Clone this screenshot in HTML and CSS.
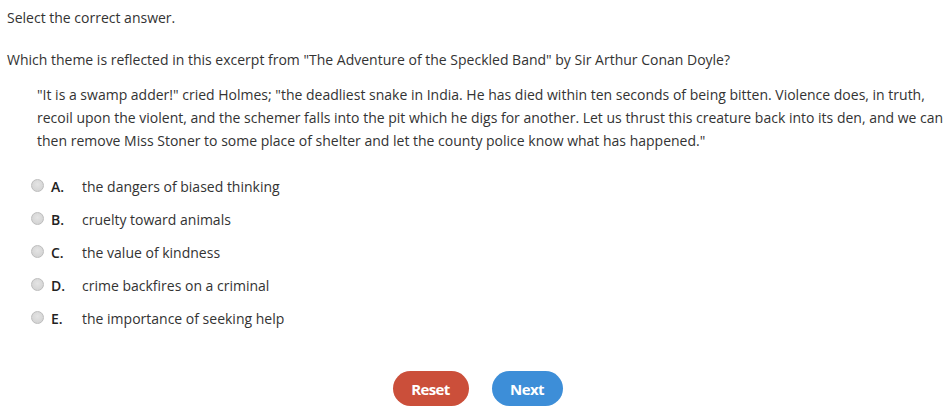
FILE: index.html
```html
<!DOCTYPE html>
<html lang="en">
<head>
    <meta charset="UTF-8">
    <title>Question</title>
    <link rel="stylesheet" href="styles.css">
</head>
<body>
    <div class="question">
        <p class="prompt">Select the correct answer.</p>
        <p class="stem">Which theme is reflected in this excerpt from "The Adventure of the Speckled Band" by Sir Arthur Conan Doyle?</p>
        <p class="excerpt">"It is a swamp adder!" cried Holmes; "the deadliest snake in India. He has died within ten seconds of being bitten. Violence does, in truth, recoil upon the violent, and the schemer falls into the pit which he digs for another. Let us thrust this creature back into its den, and we can then remove Miss Stoner to some place of shelter and let the county police know what has happened."</p>

        <ul class="options">
            <li><span class="radio"></span><span class="letter">A.</span><span class="answer">the dangers of biased thinking</span></li>
            <li><span class="radio"></span><span class="letter">B.</span><span class="answer">cruelty toward animals</span></li>
            <li><span class="radio"></span><span class="letter">C.</span><span class="answer">the value of kindness</span></li>
            <li><span class="radio"></span><span class="letter">D.</span><span class="answer">crime backfires on a criminal</span></li>
            <li><span class="radio"></span><span class="letter">E.</span><span class="answer">the importance of seeking help</span></li>
        </ul>

        <div class="actions">
            <button class="btn reset">Reset</button>
            <button class="btn next">Next</button>
        </div>
    </div>
</body>
</html>
```

FILE: styles.css
```css
body {
    margin: 0;
    padding: 0;
    background: #fff;
    color: #333;
    font-family: 'Open Sans', sans-serif;
    font-size: 14px;
    overflow: hidden;
}

.question {
    padding: 8px 7px 0 7px;
}

p {
    margin: 0;
}

.prompt {
    line-height: 20px;
}

.stem {
    margin-top: 22px;
    line-height: 20px;
}

.excerpt {
    margin-top: 13px;
    padding-left: 30px;
    line-height: 23px;
}

.options {
    list-style: none;
    margin: 18px 0 0 0;
    padding: 0 0 0 24px;
}

.options li {
    display: flex;
    align-items: center;
    height: 33px;
}

.radio {
    width: 11px;
    height: 11px;
    border-radius: 50%;
    border: 1px solid #bdbdbd;
    background: radial-gradient(circle at 50% 40%, #e4e4e4, #cfcfcf);
    margin-right: 7px;
    margin-top: -2px;
}

.letter {
    width: 31px;
    font-weight: 600;
    font-size: 14px;
    color: #222;
}

.actions {
    display: flex;
    justify-content: center;
    gap: 23px;
    margin-top: 36px;
    padding-left: 4px;
}

.btn {
    width: 76px;
    height: 35px;
    border: none;
    border-radius: 18px;
    color: #fff;
    font-family: 'Open Sans', sans-serif;
    font-size: 15px;
    font-weight: 700;
    letter-spacing: -0.6px;
}

.reset {
    background: #cb4f3a;
}

.next {
    width: 71px;
    background: #3d8ed8;
}
```
